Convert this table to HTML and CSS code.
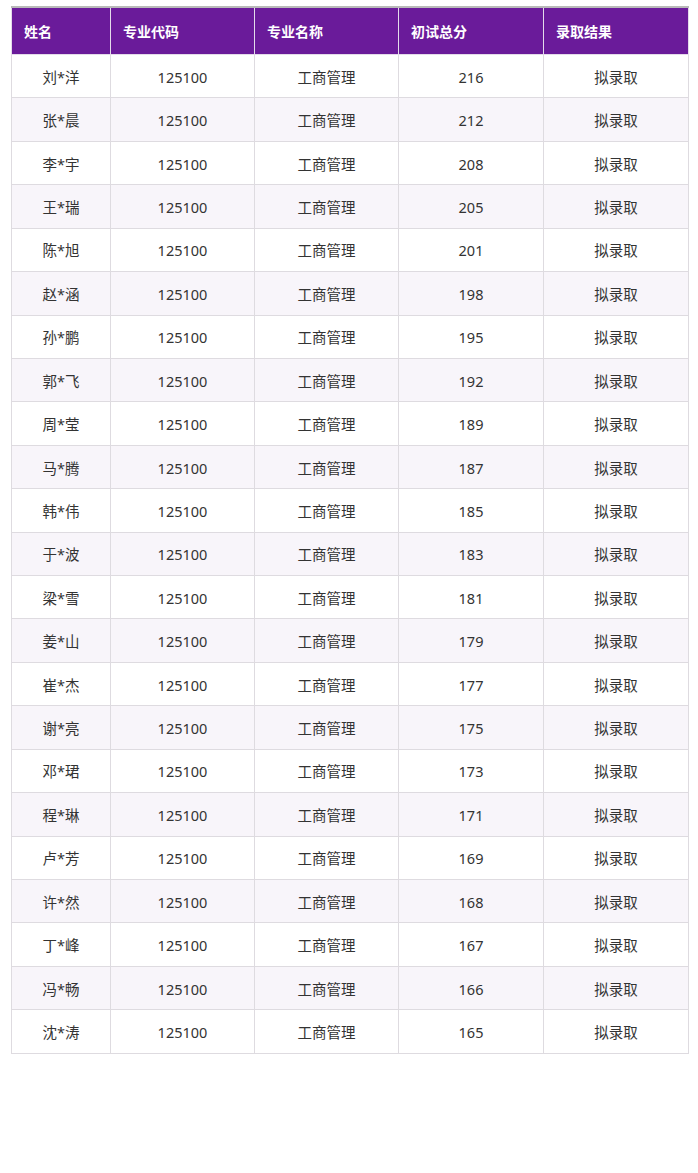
FILE: index.html
```html
<!DOCTYPE html>
<html lang="zh">
<head>
<meta charset="utf-8">
<title>录取名单</title>
<link rel="stylesheet" href="styles.css">
</head>
<body>
<div class="wrap">
<table class="list">
<colgroup>
<col class="c1"><col class="c2"><col class="c3"><col class="c4"><col class="c5">
</colgroup>
<thead>
<tr><th>姓名</th><th>专业代码</th><th>专业名称</th><th>初试总分</th><th>录取结果</th></tr>
</thead>
<tbody>
<tr><td>刘*洋</td><td>125100</td><td>工商管理</td><td>216</td><td>拟录取</td></tr>
<tr><td>张*晨</td><td>125100</td><td>工商管理</td><td>212</td><td>拟录取</td></tr>
<tr><td>李*宇</td><td>125100</td><td>工商管理</td><td>208</td><td>拟录取</td></tr>
<tr><td>王*瑞</td><td>125100</td><td>工商管理</td><td>205</td><td>拟录取</td></tr>
<tr><td>陈*旭</td><td>125100</td><td>工商管理</td><td>201</td><td>拟录取</td></tr>
<tr><td>赵*涵</td><td>125100</td><td>工商管理</td><td>198</td><td>拟录取</td></tr>
<tr><td>孙*鹏</td><td>125100</td><td>工商管理</td><td>195</td><td>拟录取</td></tr>
<tr><td>郭*飞</td><td>125100</td><td>工商管理</td><td>192</td><td>拟录取</td></tr>
<tr><td>周*莹</td><td>125100</td><td>工商管理</td><td>189</td><td>拟录取</td></tr>
<tr><td>马*腾</td><td>125100</td><td>工商管理</td><td>187</td><td>拟录取</td></tr>
<tr><td>韩*伟</td><td>125100</td><td>工商管理</td><td>185</td><td>拟录取</td></tr>
<tr><td>于*波</td><td>125100</td><td>工商管理</td><td>183</td><td>拟录取</td></tr>
<tr><td>梁*雪</td><td>125100</td><td>工商管理</td><td>181</td><td>拟录取</td></tr>
<tr><td>姜*山</td><td>125100</td><td>工商管理</td><td>179</td><td>拟录取</td></tr>
<tr><td>崔*杰</td><td>125100</td><td>工商管理</td><td>177</td><td>拟录取</td></tr>
<tr><td>谢*亮</td><td>125100</td><td>工商管理</td><td>175</td><td>拟录取</td></tr>
<tr><td>邓*珺</td><td>125100</td><td>工商管理</td><td>173</td><td>拟录取</td></tr>
<tr><td>程*琳</td><td>125100</td><td>工商管理</td><td>171</td><td>拟录取</td></tr>
<tr><td>卢*芳</td><td>125100</td><td>工商管理</td><td>169</td><td>拟录取</td></tr>
<tr><td>许*然</td><td>125100</td><td>工商管理</td><td>168</td><td>拟录取</td></tr>
<tr><td>丁*峰</td><td>125100</td><td>工商管理</td><td>167</td><td>拟录取</td></tr>
<tr><td>冯*畅</td><td>125100</td><td>工商管理</td><td>166</td><td>拟录取</td></tr>
<tr><td>沈*涛</td><td>125100</td><td>工商管理</td><td>165</td><td>拟录取</td></tr>
</tbody>
</table>
</div>
</body>
</html>
```
FILE: styles.css
```css
html, body {
  margin: 0;
  padding: 0;
  background: #ffffff;
}
body {
  font-family: "Noto Sans", "Noto Sans CJK SC", sans-serif;
  color: #333333;
}
.wrap {
  padding: 6px 0 0 11px;
}
.list {
  border-collapse: collapse;
  width: 677px;
  table-layout: fixed;
  border-top: 2px solid #b9b9b9;
  font-size: 14.5px;
}
.c1 { width: 99px; }
.c2 { width: 144px; }
.c3 { width: 144px; }
.c4 { width: 145px; }
.c5 { width: 145px; }
.list th {
  background: #6a1b9a;
  color: #ffffff;
  font-weight: 700;
  text-align: left;
  padding: 0 0 0 12px;
  height: 46px;
  border: 1px solid #e4dbea;
  border-top: 0;
  font-size: 14px;
}
.list td {
  text-align: center;
  padding: 1px 0 0;
  height: 41.43px;
  border: 1px solid #dedbe0;
  line-height: 20px;
}
.list tbody tr:nth-child(even) td {
  background: #f8f5fa;
}
```
